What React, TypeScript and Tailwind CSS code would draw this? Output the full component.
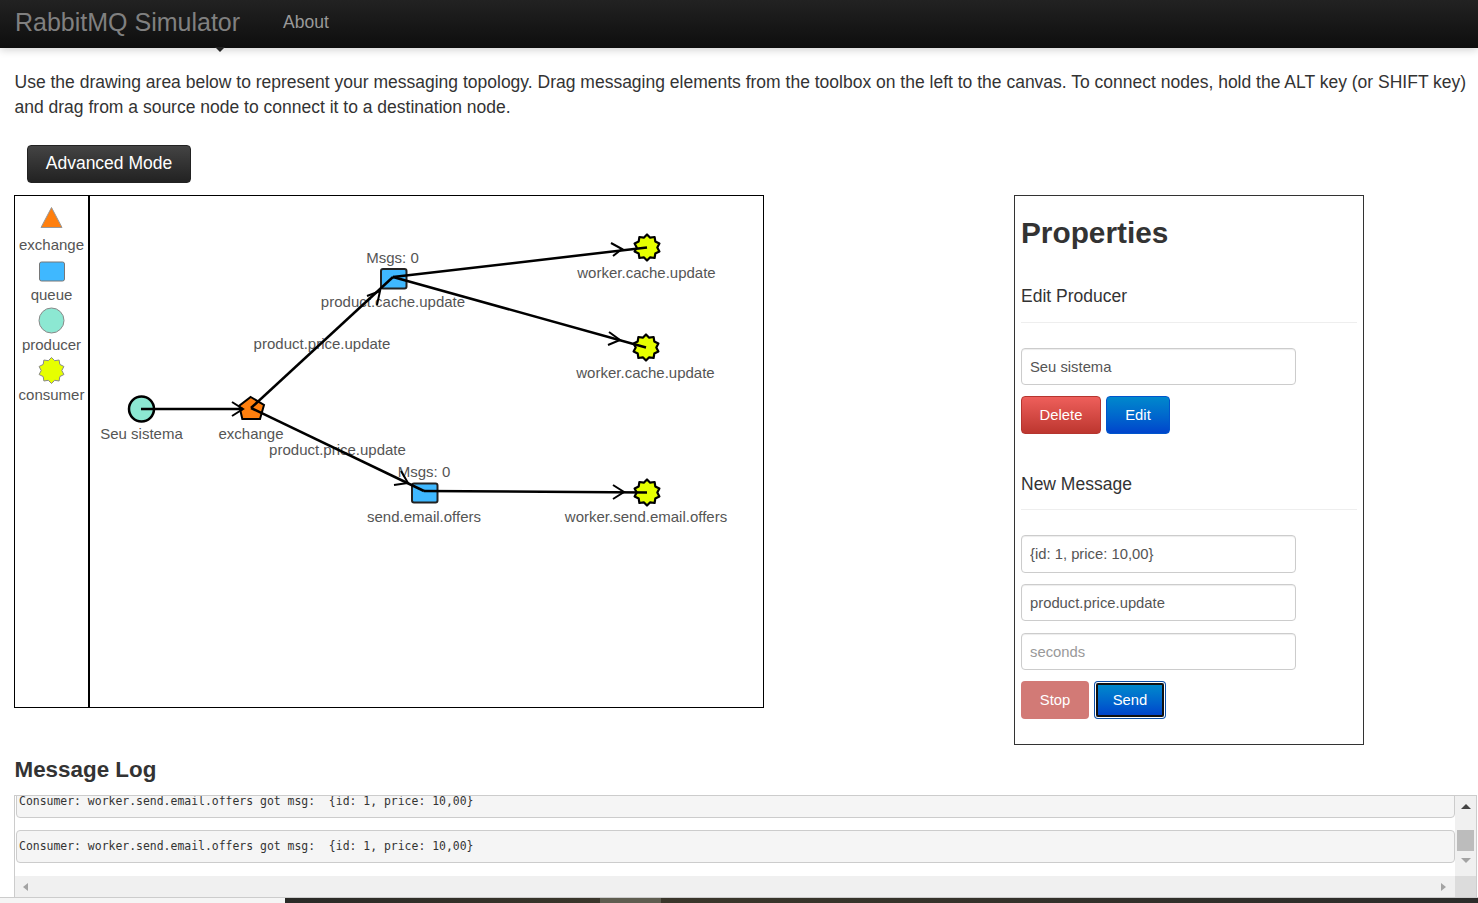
const fill = { exchange: "#ff7f0e", queue: "#3fb8ff", producer: "#8ce8d2", consumer: "#e6ff00" };

// bumpy star used for consumers
function starPoints(cx: number, cy: number, outer: number, inner: number) {
  const pts: string[] = [];
  for (let i = 0; i < 20; i++) {
    const r = i % 2 === 0 ? outer : inner;
    const a = (Math.PI * i) / 10 - Math.PI / 2;
    pts.push(`${(cx + r * Math.cos(a)).toFixed(1)},${(cy + r * Math.sin(a)).toFixed(1)}`);
  }
  return pts.join(" ");
}

const edges = [
  { x1: 141, y1: 409, x2: 243, y2: 409 },
  { x1: 251, y1: 408, x2: 393, y2: 277 },
  { x1: 251, y1: 408, x2: 424, y2: 491 },
  { x1: 393, y1: 277, x2: 647, y2: 247.5 },
  { x1: 393, y1: 277, x2: 646, y2: 347.5 },
  { x1: 424, y1: 491, x2: 647, y2: 492.5 },
];

const heads = [
  "M232,402 L243,409 L232,416",
  "M367,296 L380,291 L377,305",
  "M394,485 L408,483 L401,471",
  "M611,243 L622,249 L613,256",
  "M609,332 L620,340 L608,345",
  "M613,485 L624,492 L613,499",
];

const labels = [
  { x: 392.5, y: 263, t: "Msgs: 0" },
  { x: 393, y: 307, t: "product.cache.update" },
  { x: 322, y: 349, t: "product.price.update" },
  { x: 141.5, y: 439, t: "Seu sistema" },
  { x: 251, y: 439, t: "exchange" },
  { x: 337.5, y: 455, t: "product.price.update" },
  { x: 424, y: 477, t: "Msgs: 0" },
  { x: 424, y: 521.5, t: "send.email.offers" },
  { x: 646, y: 522, t: "worker.send.email.offers" },
  { x: 646.5, y: 277.5, t: "worker.cache.update" },
  { x: 645.5, y: 378, t: "worker.cache.update" },
];

function ToolItem({ label, children }: { label: string; children: React.ReactNode }) {
  return (
    <div className="flex h-[50px] flex-col items-center">
      <svg width="30" height="30" viewBox="0 0 30 30">
        {children}
      </svg>
      <span className="text-[15px] leading-[20px] text-[#555]">{label}</span>
    </div>
  );
}

function Toolbox() {
  return (
    <div className="w-[75px] shrink-0 border-r-2 border-black pt-[9px]">
      <ToolItem label="exchange">
        <polygon points="14.5,2.5 25,22.5 4,22.5" fill={fill.exchange} stroke="#999" strokeWidth="1" />
      </ToolItem>
      <ToolItem label="queue">
        <rect x="2.5" y="7" width="25" height="19" rx="2" fill={fill.queue} stroke="#777" strokeWidth="1" />
      </ToolItem>
      <ToolItem label="producer">
        <circle cx="14.5" cy="15.5" r="12.5" fill={fill.producer} stroke="#888" strokeWidth="1" />
      </ToolItem>
      <ToolItem label="consumer">
        <polygon points={starPoints(14.5, 15.5, 13, 10.3)} fill={fill.consumer} stroke="#888" strokeWidth="1" strokeLinejoin="round" />
      </ToolItem>
    </div>
  );
}

function Diagram() {
  return (
    <svg className="block flex-1" width="673" height="511" viewBox="90 196 673 511">
      {labels.map((l, i) => (
        <text key={i} x={l.x} y={l.y} textAnchor="middle" fontSize="15" fill="#555">
          {l.t}
        </text>
      ))}
      <circle cx="141.5" cy="409" r="12.5" fill={fill.producer} stroke="#000" strokeWidth="2.5" />
      <polygon points="250.7,397 264,405 260,419 242.3,419 239.3,405.7" fill={fill.exchange} stroke="#000" strokeWidth="2" />
      <rect x="381" y="269" width="25.5" height="19.5" rx="2" fill={fill.queue} stroke="#222" strokeWidth="2" />
      <rect x="412" y="483.5" width="25.5" height="19" rx="2" fill={fill.queue} stroke="#222" strokeWidth="2" />
      <polygon points={starPoints(647, 247.5, 13, 10.3)} fill={fill.consumer} stroke="#000" strokeWidth="2.2" strokeLinejoin="round" />
      <polygon points={starPoints(646, 347.5, 13, 10.3)} fill={fill.consumer} stroke="#000" strokeWidth="2.2" strokeLinejoin="round" />
      <polygon points={starPoints(647, 492.5, 13, 10.3)} fill={fill.consumer} stroke="#000" strokeWidth="2.2" strokeLinejoin="round" />
      {edges.map((e, i) => (
        <line key={i} {...e} stroke="#000" strokeWidth="2.5" />
      ))}
      {heads.map((d, i) => (
        <path key={i} d={d} fill="none" stroke="#000" strokeWidth="2" />
      ))}
    </svg>
  );
}

function Field({ value, placeholder, className }: { value?: string; placeholder?: string; className: string }) {
  return (
    <input
      readOnly
      value={value}
      placeholder={placeholder}
      className={`block w-[275px] rounded-[4px] border border-[#ccc] bg-white px-[8px] text-[14.8px] text-[#555] placeholder:text-[#999] shadow-[inset_0_1px_1px_rgba(0,0,0,0.075)] ${className}`}
    />
  );
}

function Properties() {
  return (
    <div className="h-[550px] w-[350px] border border-[#333] px-[6px] pt-[19px]">
      <h1 className="text-[29.8px] font-bold leading-[36px] text-[#333]">Properties</h1>
      <h4 className="mt-[33px] text-[17.5px] leading-[25px] text-[#333]">Edit Producer</h4>
      <hr className="mt-[13px] border-[#eee]" />
      <Field value="Seu sistema" className="mt-[25px] h-[37px]" />
      <div className="mt-[11px] flex gap-[5px]">
        <button className="h-[38px] w-[80px] rounded-[4px] border border-[#b5352f] bg-gradient-to-b from-[#ee5f5b] to-[#bd362f] pt-px text-[14.8px] text-white">
          Delete
        </button>
        <button className="h-[38px] w-[64px] rounded-[4px] border border-[#0055cc] bg-gradient-to-b from-[#0088cc] to-[#0044cc] pt-px text-[14.8px] text-white">
          Edit
        </button>
      </div>
      <h4 className="mt-[38px] text-[17.5px] leading-[25px] text-[#333]">New Message</h4>
      <hr className="mt-[12px] border-[#eee]" />
      <Field value="{id: 1, price: 10,00}" className="mt-[25px] h-[38px]" />
      <Field value="product.price.update" className="mt-[11px] h-[37px]" />
      <Field placeholder="seconds" className="mt-[12px] h-[37px]" />
      <div className="mt-[11px] flex items-center">
        <button className="h-[38px] w-[68px] rounded-[4px] bg-[#d27a76] pt-px text-[14.8px] text-white">Stop</button>
        <button className="ml-[7px] h-[34px] w-[68px] rounded-[2px] border-2 border-[#111] bg-gradient-to-b from-[#0088cc] to-[#0044cc] pt-px text-[14.8px] text-white shadow-[0_0_0_1px_#fff,0_0_0_2px_#0b4fa8]">
          Send
        </button>
      </div>
    </div>
  );
}

const logLine = "Consumer: worker.send.email.offers got msg:  {id: 1, price: 10,00}";

function LogEntry({ className }: { className?: string }) {
  return (
    <pre
      className={`h-[33px] rounded-[4px] border border-[#ccc] bg-[#f5f5f5] px-[2px] font-['DejaVu_Sans_Mono',monospace] text-[11.45px] leading-[31px] text-[#333] ${className ?? ""}`}
    >
      {logLine}
    </pre>
  );
}

function MessageLog() {
  return (
    <div className="mt-[10px] flex h-[102px] w-[1463px] flex-col overflow-hidden border-t border-r border-l border-[#ccc]">
      <div className="flex min-h-0 flex-1">
        <div className="min-w-0 flex-1 overflow-hidden pl-px">
          <LogEntry className="-mt-[11px]" />
          <LogEntry className="mt-[12px]" />
        </div>
        <div className="flex w-[21px] shrink-0 flex-col items-center bg-[#f0f0f0]">
          <div className="mt-[8px] h-0 w-0 border-r-[5px] border-b-[5px] border-l-[5px] border-r-transparent border-b-[#444] border-l-transparent" />
          <div className="mt-[21px] h-[21px] w-[17px] bg-[#bcbcbc]" />
          <div className="mt-[7px] h-0 w-0 border-t-[5px] border-r-[5px] border-l-[5px] border-t-[#a3a3a3] border-r-transparent border-l-transparent" />
        </div>
      </div>
      <div className="flex h-[21px] shrink-0 items-center bg-[#f0f0f0]">
        <div className="ml-[8px] h-0 w-0 border-t-[4px] border-r-[5px] border-b-[4px] border-t-transparent border-r-[#a3a3a3] border-b-transparent" />
        <div className="flex-1" />
        <div className="mr-[9px] h-0 w-0 border-t-[4px] border-b-[4px] border-l-[5px] border-t-transparent border-b-transparent border-l-[#a3a3a3]" />
        <div className="h-[21px] w-[21px] bg-[#dcdcdc]" />
      </div>
    </div>
  );
}

export default function App() {
  return (
    <div className="relative h-[903px] w-[1478px] overflow-hidden bg-white font-['Liberation_Sans',Arial,sans-serif]">
      {/* Navbar */}
      <nav className="flex h-12 items-center bg-gradient-to-b from-[#222] to-[#0e0e0e] pl-[15px] pb-[3px] shadow-[0_2px_8px_rgba(0,0,0,0.18)]">
        <span className="text-[25px] text-[#808080]">RabbitMQ Simulator</span>
        <span className="ml-[43px] text-[17.5px] text-[#999]">About</span>
      </nav>
      <div className="absolute top-[47px] left-[215px] h-0 w-0 border-t-[5px] border-r-[5px] border-l-[5px] border-t-[#222] border-r-transparent border-l-transparent" />

      <main className="h-[849px] pl-[14px]">
        <p className="whitespace-nowrap pt-[22px] pl-[0.5px] text-[17.5px] leading-[25px] text-[#333]">
          Use the drawing area below to represent your messaging topology. Drag messaging elements from the toolbox on the left to the canvas. To connect nodes, hold the ALT key (or SHIFT key)
          <br />
          and drag from a source node to connect it to a destination node.
        </p>
        <button className="mt-[25px] ml-[13px] block h-[38px] w-[164px] rounded-[4px] border border-[#222] bg-gradient-to-b from-[#444] to-[#222] pb-px text-[17.5px] text-white">
          Advanced Mode
        </button>

        <div className="mt-[12px] flex items-start gap-[250px]">
          <div className="flex h-[513px] w-[750px] border border-black">
            <Toolbox />
            <Diagram />
          </div>
          <Properties />
        </div>

        <h2 className="mt-[10px] pl-[0.5px] text-[22.4px] font-bold leading-[30px] text-[#333]">Message Log</h2>
        <MessageLog />
      </main>

      {/* Bottom strip */}
      <div className="absolute right-0 bottom-0 left-0 flex h-[6px] border-t border-[#ccc]">
        <div className="w-[285px] bg-[#f5f5f5]" />
        <div className="w-[315px] bg-gradient-to-r from-[#2a2a27] to-[#3a362a]" />
        <div className="w-[61px] bg-[#5f5d50]" />
        <div className="flex-1 bg-gradient-to-r from-[#3a362a] to-[#2c2c2a]" />
      </div>
    </div>
  );
}
